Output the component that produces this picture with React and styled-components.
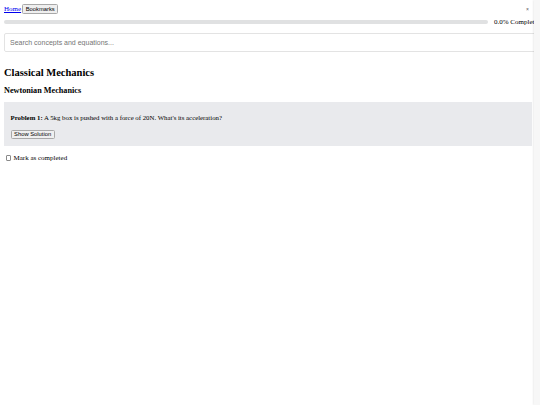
import React from 'react';
import styled, { createGlobalStyle } from 'styled-components';

const GlobalStyle = createGlobalStyle`
  html, body {
    margin:0;
    padding:0;
    background:#fff;
  }
  body {
    font-family:"Liberation Serif", "Times New Roman", serif;
    font-size:7px;
    color:#000;
    overflow:hidden;
    -webkit-font-smoothing:antialiased;
  }
`;

const Page = styled.div`
  position:relative;
  width:540px;
  height:405px;
  overflow:hidden;
`;

const Main = styled.main`
  padding:4px 8px 0 4px;
`;

const Nav = styled.nav`
  display:flex;
  align-items:center;
  gap:1px;
  height:10px;
`;

const NavLink = styled.a`
  color:#0000ee;
  text-decoration:underline;
  font-size:7px;
  line-height:8px;
`;

const SmallButton = styled.button`
  font-family:"Liberation Sans", Arial, sans-serif;
  font-size:5.8px;
  line-height:6.5px;
  padding:0.5px 2.6px;
  border:1px solid #a8a8a8;
  border-radius:1.5px;
  background:#efefef;
  color:#000;
  cursor:pointer;
`;

const ProgressRow = styled.div`
  display:flex;
  align-items:center;
  gap:6px;
  margin-top:4px;
  height:8px;
`;

const ProgressTrack = styled.div`
  flex:0 0 calc(100% - 44px);
  height:3.5px;
  border-radius:2px;
  background:#e0e1e2;
  overflow:hidden;
`;

const ProgressFill = styled.div`
  height:100%;
  background:#4caf50;
`;

const ProgressLabel = styled.span`
  white-space:nowrap;
  font-size:7px;
  line-height:8px;
`;

const CloseButton = styled.span`
  position:absolute;
  top:7px;
  right:11px;
  font-family:"Liberation Sans", Arial, sans-serif;
  font-size:5px;
  line-height:5px;
  color:#555;
`;

const SearchInput = styled.input`
  display:block;
  box-sizing:border-box;
  width:calc(100% + 8px);
  height:19px;
  margin:7px 0 0;
  padding:0 5px;
  border:1px solid #e3e3e3;
  border-radius:2px;
  font-family:"Liberation Sans", Arial, sans-serif;
  font-size:7px;
  color:#000;
  outline:none;
  &::placeholder {
    color:#757575;
  }
`;

const SubjectTitle = styled.h2`
  margin:14.5px 0 0;
  font-size:10.5px;
  line-height:12px;
  font-weight:bold;
`;

const TopicTitle = styled.h3`
  margin:7px 0 0;
  font-size:8.2px;
  line-height:9.4px;
  font-weight:bold;
`;

const ProblemCard = styled.div`
  margin:7.5px 0 0;
  padding:11.5px 6.5px 6.5px;
  background:#e9eaed;
`;

const ProblemText = styled.p`
  margin:0 0 8px;
  font-size:6.8px;
  line-height:8px;
`;

const CompleteRow = styled.label`
  display:flex;
  align-items:center;
  margin-top:7px;
  height:10px;
  font-size:7px;
  line-height:8px;
`;

const Checkbox = styled.input`
  appearance:none;
  box-sizing:border-box;
  width:5.5px;
  height:5.5px;
  margin:0 2.5px 0 1.5px;
  border:0.5px solid #8a8a8a;
  border-radius:1px;
  background:#fff;
  &:checked {
    background:#0075ff;
    border-color:#0075ff;
  }
`;

const Aside = styled.aside`
  position:absolute;
  top:0;
  right:0;
  bottom:0;
  width:6px;
  background:#f7f7f7;
  box-shadow:-1px 0 2px rgba(0,0,0,0.07);
`;

const progress = 0;

const App = () => {
  return (
    <Page>
      <GlobalStyle />
      <Main>
        <Nav>
          <NavLink href="#">Home</NavLink>
          <SmallButton>Bookmarks</SmallButton>
        </Nav>
        <ProgressRow>
          <ProgressTrack>
            <ProgressFill style={{ width: `${progress}%` }} />
          </ProgressTrack>
          <ProgressLabel>{progress.toFixed(1)}% Complete</ProgressLabel>
        </ProgressRow>
        <SearchInput placeholder="Search concepts and equations..." />
        <SubjectTitle>Classical Mechanics</SubjectTitle>
        <TopicTitle>Newtonian Mechanics</TopicTitle>
        <ProblemCard>
          <ProblemText>
            <strong>Problem 1:</strong> A 5kg box is pushed with a force of 20N. What's its acceleration?
          </ProblemText>
          <SmallButton>Show Solution</SmallButton>
        </ProblemCard>
        <CompleteRow>
          <Checkbox type="checkbox" />
          Mark as completed
        </CompleteRow>
      </Main>
      <CloseButton>×</CloseButton>
      <Aside />
    </Page>
  );
};

export default App;
